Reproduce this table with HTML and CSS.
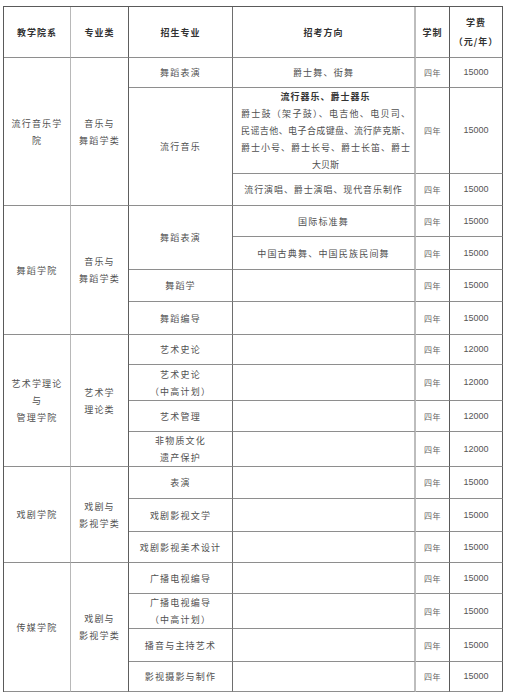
FILE: index.html
```html
<!DOCTYPE html>
<html lang="zh-CN">
<head>
<meta charset="utf-8">
<title>招生专业</title>
<link rel="stylesheet" href="styles.css">
</head>
<body>
<table class="plan">
  <colgroup>
    <col class="w-dept"><col class="w-cat"><col class="w-major"><col class="w-dir"><col class="w-yrs"><col class="w-fee">
  </colgroup>
  <thead>
    <tr class="h51">
      <th class="c1">教学院系</th>
      <th class="c2">专业类</th>
      <th class="c3">招生专业</th>
      <th class="c4">招考方向</th>
      <th class="c5">学制</th>
      <th class="c6">学费<br>（元/年）</th>
    </tr>
  </thead>
  <tbody>
    <tr class="h30">
      <td class="c1" rowspan="3">流行音乐学<br>院</td>
      <td class="c2" rowspan="3">音乐与<br>舞蹈学类</td>
      <td class="c3">舞蹈表演</td>
      <td class="c4">爵士舞、街舞</td>
      <td class="c5 yrs">四年</td>
      <td class="c6 fee">15000</td>
    </tr>
    <tr class="h86">
      <td class="c3" rowspan="2">流行音乐</td>
      <td class="c4 para">
        <div class="ln strong">流行器乐、爵士器乐</div>
        <div class="ln just">爵士鼓（架子鼓）、电吉他、电贝司、</div>
        <div class="ln just">民谣吉他、电子合成键盘、流行萨克斯、</div>
        <div class="ln just">爵士小号、爵士长号、爵士长笛、爵士</div>
        <div class="ln">大贝斯</div>
      </td>
      <td class="c5 yrs">四年</td>
      <td class="c6 fee">15000</td>
    </tr>
    <tr class="h32">
      <td class="c4 tight">流行演唱、爵士演唱、现代音乐制作</td>
      <td class="c5 yrs">四年</td>
      <td class="c6 fee">15000</td>
    </tr>

    <tr class="h31">
      <td class="c1" rowspan="4">舞蹈学院</td>
      <td class="c2" rowspan="4">音乐与<br>舞蹈学类</td>
      <td class="c3" rowspan="2">舞蹈表演</td>
      <td class="c4">国际标准舞</td>
      <td class="c5 yrs">四年</td>
      <td class="c6 fee">15000</td>
    </tr>
    <tr class="h33">
      <td class="c4">中国古典舞、中国民族民间舞</td>
      <td class="c5 yrs">四年</td>
      <td class="c6 fee">15000</td>
    </tr>
    <tr class="h32">
      <td class="c3">舞蹈学</td>
      <td class="c4"></td>
      <td class="c5 yrs">四年</td>
      <td class="c6 fee">15000</td>
    </tr>
    <tr class="h33">
      <td class="c3">舞蹈编导</td>
      <td class="c4"></td>
      <td class="c5 yrs">四年</td>
      <td class="c6 fee">15000</td>
    </tr>

    <tr class="h30">
      <td class="c1" rowspan="4">艺术学理论<br>与<br>管理学院</td>
      <td class="c2" rowspan="4">艺术学<br>理论类</td>
      <td class="c3">艺术史论</td>
      <td class="c4"></td>
      <td class="c5 yrs">四年</td>
      <td class="c6 fee">12000</td>
    </tr>
    <tr class="h36">
      <td class="c3">艺术史论<br>（中高计划）</td>
      <td class="c4"></td>
      <td class="c5 yrs">四年</td>
      <td class="c6 fee">12000</td>
    </tr>
    <tr class="h31">
      <td class="c3">艺术管理</td>
      <td class="c4"></td>
      <td class="c5 yrs">四年</td>
      <td class="c6 fee">12000</td>
    </tr>
    <tr class="h35">
      <td class="c3">非物质文化<br>遗产保护</td>
      <td class="c4"></td>
      <td class="c5 yrs">四年</td>
      <td class="c6 fee">12000</td>
    </tr>

    <tr class="h32">
      <td class="c1" rowspan="3">戏剧学院</td>
      <td class="c2" rowspan="3">戏剧与<br>影视学类</td>
      <td class="c3">表演</td>
      <td class="c4"></td>
      <td class="c5 yrs">四年</td>
      <td class="c6 fee">15000</td>
    </tr>
    <tr class="h33">
      <td class="c3">戏剧影视文学</td>
      <td class="c4"></td>
      <td class="c5 yrs">四年</td>
      <td class="c6 fee">15000</td>
    </tr>
    <tr class="h31">
      <td class="c3">戏剧影视美术设计</td>
      <td class="c4"></td>
      <td class="c5 yrs">四年</td>
      <td class="c6 fee">15000</td>
    </tr>

    <tr class="h31">
      <td class="c1" rowspan="4">传媒学院</td>
      <td class="c2" rowspan="4">戏剧与<br>影视学类</td>
      <td class="c3">广播电视编导</td>
      <td class="c4"></td>
      <td class="c5 yrs">四年</td>
      <td class="c6 fee">15000</td>
    </tr>
    <tr class="h35">
      <td class="c3">广播电视编导<br>（中高计划）</td>
      <td class="c4"></td>
      <td class="c5 yrs">四年</td>
      <td class="c6 fee">15000</td>
    </tr>
    <tr class="h33">
      <td class="c3">播音与主持艺术</td>
      <td class="c4"></td>
      <td class="c5 yrs">四年</td>
      <td class="c6 fee">15000</td>
    </tr>
    <tr class="h30">
      <td class="c3">影视摄影与制作</td>
      <td class="c4"></td>
      <td class="c5 yrs">四年</td>
      <td class="c6 fee">15000</td>
    </tr>
  </tbody>
</table>
</body>
</html>
```

FILE: styles.css
```css
html, body {
  margin: 0;
  padding: 0;
  background: #ffffff;
}

body {
  padding: 6px 0 0 3px;
  font-family: "Noto Sans CJK SC", "Noto Sans", sans-serif;
  color: #505050;
}

.plan {
  table-layout: fixed;
  width: 500px;
  border-collapse: separate;
  border-spacing: 0;
  border-top: 1px solid #5a5a5a;
  border-left: 1px solid #5a5a5a;
}

.w-dept { width: 67px; }
.w-cat { width: 58px; }
.w-major { width: 104px; }
.w-dir { width: 183px; }
.w-yrs { width: 34px; }
.w-fee { width: 53px; }

.plan th,
.plan td {
  box-sizing: border-box;
  padding: 0 3px;
  text-align: center;
  vertical-align: middle;
  font-size: 9px;
  line-height: 17px;
  letter-spacing: 1.2px;
  font-weight: 400;
  border-bottom: 1px solid #8e8e8e;
  border-right: 1px solid #8e8e8e;
}

.plan th {
  font-weight: 700;
  color: #333333;
  line-height: 19px;
  letter-spacing: 1px;
}

.plan .c1 { border-right-color: #b8b8b8; }
.plan .c2 { border-right-color: #5e5e5e; }
.plan .c3 { border-right-color: #6e6e6e; }
.plan .c4 { border-right: 2px solid #bdbdbd; }
.plan .c5 { border-right-color: #5a5a5a; }
.plan .c6 { border-right-color: #5a5a5a; }

.h30 { height: 30px; }
.h31 { height: 31px; }
.h32 { height: 32px; }
.h33 { height: 33px; }
.h35 { height: 35px; }
.h36 { height: 36px; }
.h51 { height: 51px; }
.h86 { height: 86px; }

.plan .para {
  padding: 0 4px 0 8px;
  letter-spacing: 0;
  line-height: 17px;
}

.ln {
  line-height: 17px;
  text-align: center;
}

.ln.just {
  text-align: justify;
  text-align-last: justify;
  letter-spacing: 0;
}

.ln.strong {
  font-weight: 700;
  color: #333333;
  letter-spacing: 1px;
}

.plan .tight {
  letter-spacing: 0.9px;
}

.plan .yrs {
  font-size: 8px;
  letter-spacing: 0.5px;
  color: #666666;
}

.plan .fee {
  font-family: "Liberation Sans", Arial, sans-serif;
  font-size: 9px;
  letter-spacing: 0;
  color: #555555;
}
```
